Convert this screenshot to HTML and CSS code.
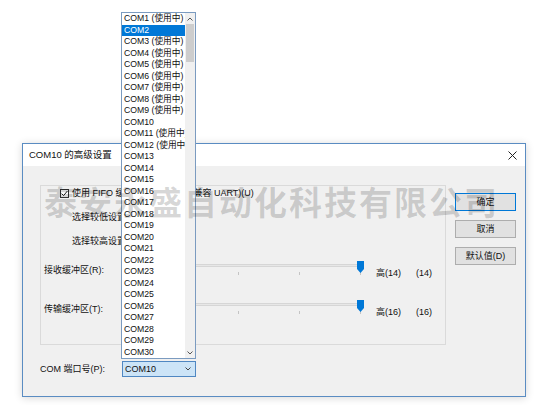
FILE: index.html
```html
<!DOCTYPE html>
<html lang="zh">
<head>
<meta charset="utf-8">
<title>COM10 的高级设置</title>
<link rel="stylesheet" href="styles.css">
</head>
<body>
<div class="dialog">
  <div class="titlebar">
    <span class="title">COM10 的高级设置</span>
    <svg class="close" width="9" height="9" viewBox="0 0 9 9"><path d="M0.5 0.5L8.5 8.5M8.5 0.5L0.5 8.5" stroke="#222" stroke-width="1" fill="none"/></svg>
  </div>
  <div class="body">
    <div class="main">
      <div class="group">
        <div class="check">
          <span class="box"><svg width="7" height="7" viewBox="0 0 7 7"><path d="M0.6 3.6L2.6 5.6L6.4 1" stroke="#222" stroke-width="1" fill="none"/></svg></span>
          <span>使用 FIFO 缓冲区(需要 16550 兼容 UART)(U)</span>
        </div>
        <div class="hint hint1">选择较低设置以纠正连接问题。</div>
        <div class="hint hint2">选择较高设置以提高性能。</div>
        <div class="slider-row row1">
          <span class="lbl">接收缓冲区(R):</span>
          <div class="slider">
            <div class="track"></div>
            <div class="ticks"><i></i><i></i><i></i><i></i></div>
            <svg class="thumb" width="7" height="12" viewBox="0 0 7 12"><polygon points="0,0 7,0 7,8 3.5,12 0,8" fill="#0078d7"/></svg>
          </div>
          <span class="hi">高(14)</span>
          <span class="val">(14)</span>
        </div>
        <div class="slider-row row2">
          <span class="lbl">传输缓冲区(T):</span>
          <div class="slider">
            <div class="track"></div>
            <div class="ticks"><i></i><i></i><i></i><i></i></div>
            <svg class="thumb" width="7" height="12" viewBox="0 0 7 12"><polygon points="0,0 7,0 7,8 3.5,12 0,8" fill="#0078d7"/></svg>
          </div>
          <span class="hi">高(16)</span>
          <span class="val">(16)</span>
        </div>
      </div>
      <div class="port-row">
        <span class="port-lbl">COM 端口号(P):</span>
        <div class="combo">
          <span>COM10</span>
          <svg width="6" height="4" viewBox="0 0 6 4"><path d="M0.5 0.5L3 3L5.5 0.5" stroke="#444" stroke-width="1" fill="none"/></svg>
        </div>
      </div>
    </div>
    <div class="buttons">
      <div class="btn default">确定</div>
      <div class="btn">取消</div>
      <div class="btn">默认值(D)</div>
    </div>
  </div>
</div>

<div class="dropdown">
  <div class="items">
    <div class="item">COM1 (使用中)</div>
    <div class="item sel">COM2</div>
    <div class="item">COM3 (使用中)</div>
    <div class="item">COM4 (使用中)</div>
    <div class="item">COM5 (使用中)</div>
    <div class="item">COM6 (使用中)</div>
    <div class="item">COM7 (使用中)</div>
    <div class="item">COM8 (使用中)</div>
    <div class="item">COM9 (使用中)</div>
    <div class="item">COM10</div>
    <div class="item">COM11 (使用中)</div>
    <div class="item">COM12 (使用中)</div>
    <div class="item">COM13</div>
    <div class="item">COM14</div>
    <div class="item">COM15</div>
    <div class="item">COM16</div>
    <div class="item">COM17</div>
    <div class="item">COM18</div>
    <div class="item">COM19</div>
    <div class="item">COM20</div>
    <div class="item">COM21</div>
    <div class="item">COM22</div>
    <div class="item">COM23</div>
    <div class="item">COM24</div>
    <div class="item">COM25</div>
    <div class="item">COM26</div>
    <div class="item">COM27</div>
    <div class="item">COM28</div>
    <div class="item">COM29</div>
    <div class="item">COM30</div>
  </div>
  <div class="scrollbar">
    <div class="arrow"><svg width="6" height="4" viewBox="0 0 6 4"><path d="M0.5 3.5L3 1L5.5 3.5" stroke="#555" stroke-width="1" fill="none"/></svg></div>
    <div class="sb-thumb"></div>
    <div class="sb-space"></div>
    <div class="arrow"><svg width="6" height="4" viewBox="0 0 6 4"><path d="M0.5 0.5L3 3L5.5 0.5" stroke="#555" stroke-width="1" fill="none"/></svg></div>
  </div>
</div>

<div class="watermark">泰安永盛自动化科技有限公司</div>
</body>
</html>
```

FILE: styles.css
```css
* { box-sizing: border-box; }
html, body { margin: 0; padding: 0; }
body {
  width: 537px;
  height: 405px;
  overflow: hidden;
  position: relative;
  background: #fff;
  font-family: "Liberation Sans", "Noto Sans CJK SC", sans-serif;
  font-size: 9px;
  line-height: 12px;
  color: #111;
}

/* dialog window */
.dialog {
  position: absolute;
  left: 22px;
  top: 143px;
  width: 504px;
  height: 254px;
  border: 1px solid #5a8cc2;
  background: #f0f0f0;
  box-shadow: 0 1px 8px rgba(0, 0, 0, 0.16);
  display: flex;
  flex-direction: column;
}
.titlebar {
  flex: none;
  height: 22px;
  background: #fff;
  display: flex;
  align-items: center;
  justify-content: space-between;
  padding: 0 8px 0 6px;
}
.title { font-size: 9.5px; }
.close { display: block; }

.body {
  flex: 1;
  display: flex;
  column-gap: 9px;
  padding: 19px 9px 0 17px;
}
.main {
  width: 406px;
  display: flex;
  flex-direction: column;
}
.group {
  height: 160px;
  border: 1px solid #dadada;
  display: flex;
  flex-direction: column;
  padding: 1px 0 0 3px;
}
.check {
  display: flex;
  align-items: center;
  margin-left: 16px;
  height: 12px;
}
.box {
  width: 9px;
  height: 9px;
  border: 1px solid #333;
  background: #fff;
  display: flex;
  align-items: center;
  justify-content: center;
  margin-right: 3px;
}
.box svg { display: block; }
.hint { margin-left: 28px; }
.hint1 { margin-top: 12px; }
.hint2 { margin-top: 12px; }

.slider-row {
  display: grid;
  grid-template-columns: 72px 250px 50px auto;
  align-items: start;
  height: 18px;
}
.row1 { margin-top: 14px; }
.row2 { margin-top: 21px; }
.lbl { margin-top: 3px; white-space: nowrap; }
.hi, .val { margin-top: 6px; white-space: nowrap; }
.hi { padding-left: 10px; }
.slider {
  position: relative;
  height: 18px;
}
.track {
  margin-top: 3px;
  margin-left: 16px;
  width: 231px;
  height: 3px;
  background: #e7e7e7;
  border: 1px solid #d6d6d6;
}
.ticks {
  display: flex;
  gap: 60px;
  margin-top: 5px;
  padding-left: 61px;
}
.ticks i {
  display: block;
  width: 1px;
  height: 3px;
  background: #c4c4c4;
}
.thumb {
  position: absolute;
  left: 241px;
  top: 0;
  display: block;
}

.port-row {
  display: flex;
  align-items: center;
  margin-top: 16px;
}
.port-lbl { width: 82px; white-space: nowrap; }
.combo {
  width: 74px;
  height: 16px;
  background: #cce4f7;
  border: 1px solid #4f87c2;
  display: flex;
  align-items: center;
  justify-content: space-between;
  padding: 0 4px 0 2px;
}
.combo svg { display: block; }

.buttons {
  display: flex;
  flex-direction: column;
  gap: 9px;
  padding-top: 8px;
}
.btn {
  width: 61px;
  height: 18px;
  background: #e1e1e1;
  border: 1px solid #adadad;
  display: flex;
  align-items: center;
  justify-content: center;
  white-space: nowrap;
}
.btn.default { border-color: #0078d7; }

/* open drop-down list */
.dropdown {
  position: absolute;
  left: 121px;
  top: 12px;
  width: 75px;
  height: 347px;
  border: 1px solid #7b9bc0;
  background: #fff;
  display: flex;
}
.items {
  width: 63px;
  display: flex;
  flex-direction: column;
}
.item {
  height: 11.5px;
  line-height: 11.5px;
  font-size: 8.7px;
  padding-left: 2px;
  white-space: nowrap;
  overflow: hidden;
}
.item.sel {
  background: #0078d7;
  color: #fff;
}
.scrollbar {
  width: 10px;
  background: #f0f0f0;
  display: flex;
  flex-direction: column;
}
.arrow {
  height: 11px;
  display: flex;
  align-items: center;
  justify-content: center;
}
.arrow svg { display: block; }
.sb-thumb {
  height: 38px;
  margin: 0 1px;
  background: #cdcdcd;
}
.sb-space { flex: 1; }

/* overlaid watermark */
.watermark {
  position: absolute;
  left: 44px;
  top: 183px;
  font-family: "Noto Sans CJK SC", sans-serif;
  font-weight: 700;
  font-size: 33px;
  line-height: 36px;
  letter-spacing: 2px;
  color: rgba(0, 0, 0, 0.16);
  white-space: nowrap;
  pointer-events: none;
}
```
